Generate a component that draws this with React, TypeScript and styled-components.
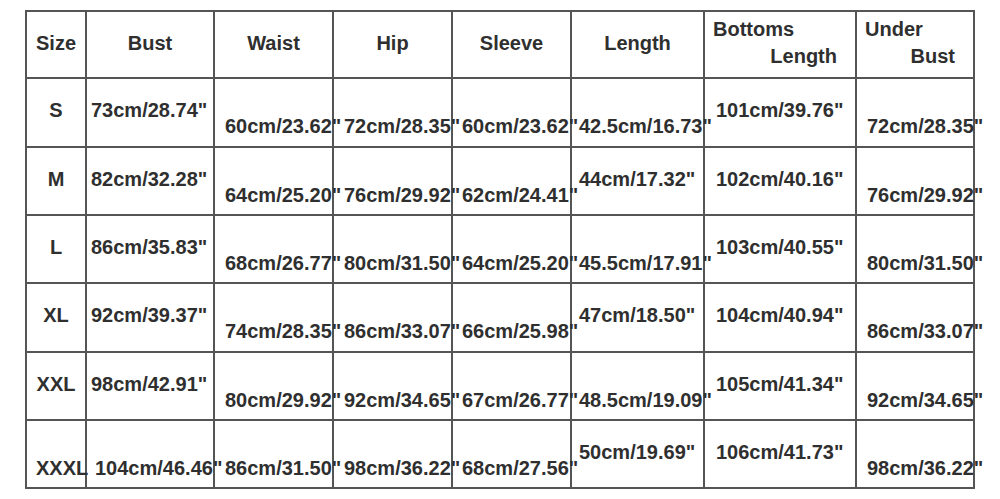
import React from "react";
import styled, { createGlobalStyle } from "styled-components";

const GlobalStyle = createGlobalStyle`
  html, body {
    margin: 0;
    padding: 0;
    background: #ffffff;
  }
  body {
    font-family: "Liberation Sans", Arial, sans-serif;
  }
`;

const Page = styled.div`
  width: 1000px;
  height: 499px;
  padding: 10px 0 0 25px;
  box-sizing: border-box;
  background: #ffffff;
`;

const Table = styled.table`
  table-layout: fixed;
  border-collapse: collapse;
  width: 948px;
  color: #2f2f2f;
  font-family: "Liberation Sans", Arial, sans-serif;
  font-weight: bold;
  font-size: 20px;
  line-height: 22px;
`;

const Row = styled.tr<{ $h: number }>`
  height: ${(p) => p.$h}px;
`;

const HeadCell = styled.th`
  border: 2px solid #555555;
  padding: 0 4px 4px;
  text-align: center;
  vertical-align: middle;
  font-weight: bold;
  white-space: nowrap;
`;

const TwoLineHead = styled.th`
  border: 2px solid #555555;
  padding: 0 18px 3px 8px;
  vertical-align: middle;
  font-weight: bold;
  line-height: 27px;
  text-align: left;
`;

const HeadLine = styled.div<{ $right?: boolean }>`
  text-align: ${(p) => (p.$right ? "right" : "left")};
  white-space: nowrap;
`;

const SizeCell = styled.td<{ $low: boolean }>`
  border: 2px solid #555555;
  padding: ${(p) => (p.$low ? 36 : 20)}px 9px 0;
  vertical-align: top;
  text-align: center;
  white-space: nowrap;
`;

const Cell = styled.td<{ $low: boolean; $indent: number }>`
  border: 2px solid #555555;
  padding: ${(p) => (p.$low ? 36 : 20)}px 0 0 ${(p) => p.$indent}px;
  vertical-align: top;
  text-align: left;
  white-space: nowrap;
  overflow: visible;
`;

const widths = [60, 128, 119, 119, 119, 133, 152, 118];
const indents = [0, 4, 10, 10, 9, 7, 11, 10];

type Value = { t: string; low: boolean; indent?: number };

const q = '"';
const rows: { size: string; low: boolean; h: number; values: Value[] }[] = [
  {
    size: "S",
    low: false,
    h: 69,
    values: [
      { t: "73cm/28.74" + q, low: false },
      { t: "60cm/23.62" + q, low: true },
      { t: "72cm/28.35" + q, low: true },
      { t: "60cm/23.62" + q, low: true },
      { t: "42.5cm/16.73" + q, low: true },
      { t: "101cm/39.76" + q, low: false },
      { t: "72cm/28.35" + q, low: true },
    ],
  },
  {
    size: "M",
    low: false,
    h: 68,
    values: [
      { t: "82cm/32.28" + q, low: false },
      { t: "64cm/25.20" + q, low: true },
      { t: "76cm/29.92" + q, low: true },
      { t: "62cm/24.41" + q, low: true },
      { t: "44cm/17.32" + q, low: false },
      { t: "102cm/40.16" + q, low: false },
      { t: "76cm/29.92" + q, low: true },
    ],
  },
  {
    size: "L",
    low: false,
    h: 68,
    values: [
      { t: "86cm/35.83" + q, low: false },
      { t: "68cm/26.77" + q, low: true },
      { t: "80cm/31.50" + q, low: true },
      { t: "64cm/25.20" + q, low: true },
      { t: "45.5cm/17.91" + q, low: true },
      { t: "103cm/40.55" + q, low: false },
      { t: "80cm/31.50" + q, low: true },
    ],
  },
  {
    size: "XL",
    low: false,
    h: 69,
    values: [
      { t: "92cm/39.37" + q, low: false },
      { t: "74cm/28.35" + q, low: true },
      { t: "86cm/33.07" + q, low: true },
      { t: "66cm/25.98" + q, low: true },
      { t: "47cm/18.50" + q, low: false },
      { t: "104cm/40.94" + q, low: false },
      { t: "86cm/33.07" + q, low: true },
    ],
  },
  {
    size: "XXL",
    low: false,
    h: 68,
    values: [
      { t: "98cm/42.91" + q, low: false },
      { t: "80cm/29.92" + q, low: true },
      { t: "92cm/34.65" + q, low: true },
      { t: "67cm/26.77" + q, low: true },
      { t: "48.5cm/19.09" + q, low: true },
      { t: "105cm/41.34" + q, low: false },
      { t: "92cm/34.65" + q, low: true },
    ],
  },
  {
    size: "XXXL",
    low: true,
    h: 68,
    values: [
      { t: "104cm/46.46" + q, low: true, indent: 8 },
      { t: "86cm/31.50" + q, low: true },
      { t: "98cm/36.22" + q, low: true },
      { t: "68cm/27.56" + q, low: true },
      { t: "50cm/19.69" + q, low: false },
      { t: "106cm/41.73" + q, low: false },
      { t: "98cm/36.22" + q, low: true },
    ],
  },
];

export default function App() {
  return (
    <>
      <GlobalStyle />
      <Page>
        <Table>
          <colgroup>
            {widths.map((w, i) => (
              <col key={i} style={{ width: w }} />
            ))}
          </colgroup>
          <thead>
            <Row $h={67}>
              <HeadCell>Size</HeadCell>
              <HeadCell>Bust</HeadCell>
              <HeadCell>Waist</HeadCell>
              <HeadCell>Hip</HeadCell>
              <HeadCell>Sleeve</HeadCell>
              <HeadCell>Length</HeadCell>
              <TwoLineHead>
                <HeadLine>Bottoms</HeadLine>
                <HeadLine $right>Length</HeadLine>
              </TwoLineHead>
              <TwoLineHead>
                <HeadLine>Under</HeadLine>
                <HeadLine $right>Bust</HeadLine>
              </TwoLineHead>
            </Row>
          </thead>
          <tbody>
            {rows.map((r) => (
              <Row key={r.size} $h={r.h}>
                <SizeCell $low={r.low}>{r.size}</SizeCell>
                {r.values.map((v, i) => (
                  <Cell key={i} $low={v.low} $indent={v.indent ?? indents[i + 1]}>
                    {v.t}
                  </Cell>
                ))}
              </Row>
            ))}
          </tbody>
        </Table>
      </Page>
    </>
  );
}
